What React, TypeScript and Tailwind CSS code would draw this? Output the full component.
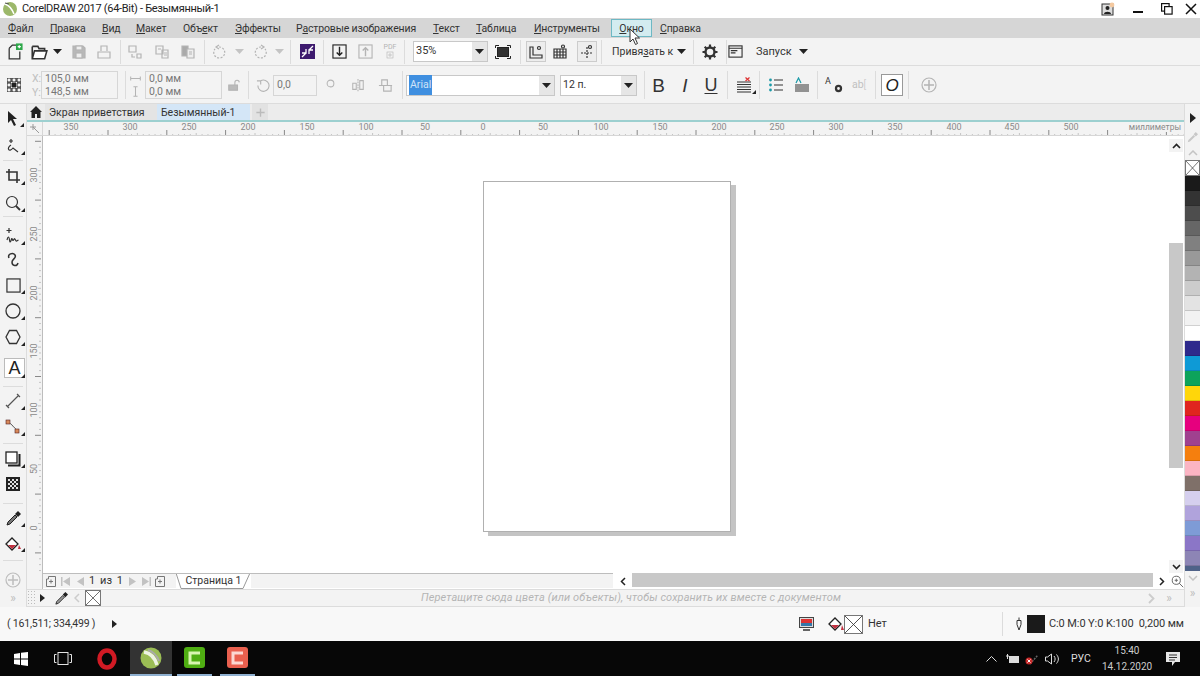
import React from "react";

type P = { children?: React.ReactNode; className?: string };
const S = ({ children, className = "text-[#333]", s = 16 }: P & { s?: number }) => (
  <svg width={s} height={s} viewBox="0 0 16 16" fill="none" stroke="currentColor" strokeWidth={1.2} className={`shrink-0 ${className}`}>
    {children}
  </svg>
);
const Slot = ({ className = "", children }: P) => (
  <div className={`flex shrink-0 items-center justify-center self-stretch ${className}`}>{children}</div>
);
const Sep = ({ className = "" }: P) => <div className={`h-[24px] w-px shrink-0 bg-[#dcdcdc] ${className}`} />;
const Gap = ({ className = "" }: P) => <div className={`shrink-0 ${className}`} />;
const Down = ({ className = "text-[#222]" }: P) => (
  <svg width="9" height="5" viewBox="0 0 9 5" className={`shrink-0 ${className}`}><path d="M0 0h9L4.5 5z" fill="currentColor" /></svg>
);
const Corner = () => <svg width="4" height="4" viewBox="0 0 4 4" className="absolute bottom-[-1px] right-[-4px]"><path d="M4 0v4H0z" fill="#222" /></svg>;

const Combo = ({ className = "", text, sel }: P & { text: string; sel?: boolean }) => (
  <div className={`flex h-[21px] shrink-0 items-stretch border border-[#c8c8c8] bg-white ${className}`}>
    <div className="flex flex-1 items-center pl-[2px]">
      <span className={sel ? "bg-[#3f8fe0] px-px py-[2px] text-[#cfe3f8]" : "text-[#333]"}>{text}</span>
    </div>
    <div className="flex w-[15px] items-center justify-center bg-[#e6e6e6]"><Down /></div>
  </div>
);

const U = ({ children }: P) => <span className="underline underline-offset-1">{children}</span>;

const menu: [string, React.ReactNode][] = [
  ["w-[42px]", <><U>Ф</U>айл</>],
  ["w-[52px]", <><U>П</U>равка</>],
  ["w-[34px]", <><U>В</U>ид</>],
  ["w-[47px]", <><U>М</U>акет</>],
  ["w-[52px]", <>Объ<U>е</U>кт</>],
  ["w-[61px]", <><U>Э</U>ффекты</>],
  ["w-[137px]", <>Р<U>а</U>стровые изображения</>],
  ["w-[43px]", <><U>Т</U>екст</>],
  ["w-[58px]", <><U>Т</U>аблица</>],
];

const hLabels: [string, number][] = [
  ["350", 71], ["300", 130], ["250", 189], ["200", 248], ["150", 307], ["100", 366], ["50", 425], ["0", 483],
  ["50", 543], ["100", 601], ["150", 660], ["200", 719], ["250", 777], ["300", 836], ["350", 895], ["400", 954], ["450", 1012], ["500", 1071],
];
const vLabels: [string, number][] = [["300", 176], ["250", 235], ["200", 294], ["150", 352], ["100", 411], ["50", 470], ["0", 529]];

const swatches = [
  "#1a1a1a", "#333333", "#4d4d4d", "#666666", "#808080", "#999999", "#b3b3b3", "#cccccc", "#e3e3e3", "#f2f2f2", "#ffffff",
  "#2e2a8c", "#0e9ad6", "#0da35b", "#ffd60a", "#e0251f", "#e6007e", "#a0418f", "#f57f0e", "#fbb4c3", "#7f7069",
  "#d5cfee", "#b0a3dc", "#7e9bd6", "#8b76c7", "#8d85b5",
];

const XBox = ({ className = "" }: P) => (
  <svg viewBox="0 0 16 16" preserveAspectRatio="none" className={`shrink-0 border border-[#777] bg-white ${className}`}>
    <path d="M0 0L16 16M16 0L0 16" stroke="#333" strokeWidth="0.8" fill="none" />
  </svg>
);

const Tool = ({ className = "", children, corner = true }: P & { corner?: boolean }) => (
  <div className={`flex shrink-0 items-center justify-center ${className}`}>
    <div className="relative flex">{children}{corner && <Corner />}</div>
  </div>
);
const HSep = () => <div className="mx-[3px] h-px shrink-0 bg-[#dcdcdc]" />;

function Title() {
  return (
    <div className="flex h-[18px] shrink-0 items-center bg-white pl-[2px] text-[#222]">
      <svg width="16" height="16" viewBox="0 0 16 16" className="shrink-0">
        <circle cx="8" cy="8" r="7" fill="#9cb86a" />
        <path d="M3 3c3 1 7 5 9 10" stroke="#fff" strokeWidth="1.6" fill="none" />
        <path d="M3 2l4 1" stroke="#555" strokeWidth="1.2" />
      </svg>
      <span className="ml-[4px] w-[1060px] text-[11px] tracking-[-0.3px]">CorelDRAW 2017 (64-Bit) - Безымянный-1</span>
      <Slot className="ml-[18px] w-[16px]">
        <svg width="14" height="14" viewBox="0 0 14 14">
          <rect x="1" y="2" width="11" height="11" fill="#ddd" stroke="#333" />
          <circle cx="6.5" cy="6" r="2" fill="#222" /><path d="M3 12c0-3 7-3 7 0z" fill="#222" />
          <circle cx="11" cy="3" r="2.4" fill="#f4c9a0" />
        </svg>
      </Slot>
      <Slot className="ml-[14px] w-[16px]"><div className="mt-[5px] h-[2px] w-[10px] bg-[#111]" /></Slot>
      <Slot className="ml-[13px] w-[16px]">
        <svg width="12" height="12" viewBox="0 0 12 12" fill="none" stroke="#111" strokeWidth="1.2"><rect x="0.6" y="0.6" width="7.5" height="7.5" /><rect x="3.6" y="3.6" width="7.5" height="7.5" fill="#fff" /></svg>
      </Slot>
      <Slot className="ml-[8px] w-[16px]">
        <svg width="12" height="12" viewBox="0 0 12 12" stroke="#111" strokeWidth="1.5"><path d="M1 1l10 10M11 1L1 11" /></svg>
      </Slot>
    </div>
  );
}

function Menu() {
  return (
    <div className="flex h-[20px] shrink-0 items-center bg-[#d6d6d6] pl-[8px] text-[10.5px] tracking-[-0.15px] text-[#333]">
      {menu.map(([w, t], i) => <div key={i} className={`shrink-0 whitespace-nowrap pt-[1px] ${w}`}>{t}</div>)}
      <div className="w-[77px] shrink-0 whitespace-nowrap pt-[1px]"><U>И</U>нструменты</div>
      <div className="flex h-[18px] w-[41px] shrink-0 items-center justify-center border border-[#6db8c4] bg-[#d3ecf0] pt-[1px]"><span><U>О</U>кно</span></div>
      <div className="ml-[8px] shrink-0 pt-[1px]"><U>С</U>правка</div>
    </div>
  );
}

function Row1() {
  const g = "text-[#b4b4b4]";
  return (
    <div className="flex h-[28px] shrink-0 items-center border-b border-[#dcdcdc] bg-[#f3f3f3] text-[11px] text-[#333]">
      <Slot className="w-[28px]"><S s={17}><path d="M3 5v10h10V8M3 5l3-3h4" /><rect x="10" y="1" width="5" height="5" fill="#2da84a" stroke="#2da84a" /><path d="M12.5 2v3M11 3.500h3" stroke="#fff" /></S></Slot>
      <Slot className="w-[22px]"><S s={18}><path d="M2 3h5l1 2h5v2M2 3v11h11l2-7H4l-2 7" fill="#fff" strokeWidth="1.4" /></S></Slot>
      <Slot className="w-[14px]"><Down /></Slot>
      <Slot className="w-[30px]"><S className={g}><path d="M2 2h10l2 2v10H2z" fill="#b8b8b8" /><rect x="5" y="2" width="6" height="4" fill="#eee" /><rect x="5" y="9" width="6" height="5" fill="#eee" /></S></Slot>
      <Slot className="w-[20px]"><S className={g}><path d="M5 7V2h6v5M2 8h12v6H2z" /></S></Slot>
      <Gap className="w-[6px]" /><Sep />
      <Slot className="w-[28px]"><S className={g}><path d="M2 2h7v6H2zM10 10h4v4h-4zM5 10v3h3" /></S></Slot>
      <Slot className="w-[26px]"><S className={g}><path d="M2 2h7v8H2zM8 6h6v8H8zM4 5h3M10 9h3M10 11h3" /></S></Slot>
      <Slot className="w-[26px]"><S className={g}><path d="M2 2h6v10H2z" fill="#aaa" /><path d="M7 5h7v9H7z" fill="#eee" /><path d="M9 8h3M9 10h3" /></S></Slot>
      <Gap className="w-[3px]" /><Sep />
      <Slot className="w-[30px]"><S className={g}><path d="M7 3a5.500 5.500 0 1 1-4 2" strokeDasharray="2 1.500" /><path d="M7 1L4 3l3 2" /></S></Slot>
      <Slot className="w-[8px]"><Down className="text-[#c4c4c4]" /></Slot>
      <Slot className="w-[34px]"><S className={g}><path d="M9 3a5.500 5.500 0 1 0 4 2" strokeDasharray="2 1.500" /><path d="M9 1l3 2-3 2" /></S></Slot>
      <Slot className="w-[4px]"><Down className="text-[#c4c4c4]" /></Slot>
      <Gap className="w-[9px]" /><Sep />
      <Slot className="w-[32px]">
        <svg width="15" height="15" viewBox="0 0 15 15"><rect width="15" height="15" fill="#3d1a6e" /><path d="M2 13l4-4M13 2L9 6M6 5v4H2M9 10V6h4" stroke="#fff" strokeWidth="1.3" fill="none" /></svg>
      </Slot>
      <Sep />
      <Slot className="w-[30px]"><S s={15} className="text-[#222]"><rect x="1" y="1" width="14" height="14" /><path d="M8 3v9M5 9l3 3 3-3" strokeWidth="1.500" /></S></Slot>
      <Slot className="w-[22px]"><S s={15} className={g}><rect x="1" y="1" width="14" height="14" /><path d="M8 13V4M5 7l3-3 3 3" strokeWidth="1.500" /></S></Slot>
      <Slot className="w-[28px]">
        <div className="flex flex-col items-center leading-none text-[#b4b4b4]"><span className="text-[7px]">PDF</span><S s={8} className={g}><rect x="2" y="2" width="12" height="12" /><path d="M8 4v8M4 8h8" /></S></div>
      </Slot>
      <Sep /><Gap className="w-[8px]" />
      <Combo className="w-[75px]" text="35%" />
      <Slot className="w-[30px]">
        <svg width="16" height="14" viewBox="0 0 16 14" fill="none" stroke="#222"><rect x="2.500" y="2.500" width="11" height="9" fill="#333" /><path d="M0.500 3V0.500H4M12 0.500h3.500V3M0.500 11v2.500H4M12 13.500h3.500V11" /></svg>
      </Slot>
      <Gap className="w-[2px]" /><Sep /><Gap className="w-[5px]" />
      <div className="flex h-[21px] w-[20px] shrink-0 items-center justify-center border border-[#ccc] bg-[#ededed]"><S><path d="M2 3v11h12v-3H5V3z" /><circle cx="11" cy="4" r="1.500" /></S></div>
      <Slot className="w-[28px]"><S><path d="M2 5h12v9H2zM2 8h12M2 11h12M5 5v9M8 5v9M11 5v9" /><circle cx="11" cy="2.500" r="1.500" /></S></Slot>
      <Slot className="w-[26px]"><div className="flex h-[21px] w-[20px] items-center justify-center border border-[#ccc] bg-[#ededed]"><S><path d="M8 3v12M2 9h12" strokeDasharray="2 1" /><circle cx="11" cy="3" r="1.500" /></S></div></Slot>
      <Gap className="w-[1px]" /><Sep /><Gap className="w-[10px]" />
      <div className="w-[62px] shrink-0 whitespace-nowrap pt-[1px] text-[10.5px]">Привя<U>з</U>ать к</div>
      <Slot className="w-[14px]"><Down /></Slot>
      <Gap className="w-[5px]" /><Sep />
      <Slot className="w-[32px]">
        <svg width="16" height="16" viewBox="0 0 16 16"><circle cx="8" cy="8" r="4.500" fill="none" stroke="#333" strokeWidth="2.400" /><path d="M8 0.500v3M8 12.500v3M0.500 8h3M12.500 8h3M2.700 2.700l2 2M11.300 11.300l2 2M13.300 2.700l-2 2M4.700 11.300l-2 2" stroke="#333" strokeWidth="2.200" /></svg>
      </Slot>
      <Sep />
      <Slot className="w-[16px]"><S s={15}><rect x="1" y="2" width="14" height="12" /><path d="M1 4.500h14M3 7h7M3 9.500h5" /></S></Slot>
      <div className="ml-[13px] w-[42px] shrink-0 pt-[1px]">Запуск</div>
      <Slot className="w-[10px]"><Down /></Slot>
    </div>
  );
}

function Row2() {
  const g = "text-[#b4b4b4]";
  return (
    <div className="flex h-[38px] shrink-0 items-center border-b border-[#dcdcdc] bg-[#f3f3f3] pt-[1px] text-[10.5px] text-[#555]">
      <Slot className="w-[28px]">
        <svg width="14" height="14" viewBox="0 0 14 14"><path d="M0 0h4v4H0zM5 0h4v4H5zM10 0h4v4h-4zM0 5h4v4H0zM10 5h4v4h-4zM0 10h4v4H0zM5 10h4v4H5zM10 10h4v4h-4z" fill="none" stroke="#222" /><rect x="5" y="5" width="4" height="4" fill="#222" /></svg>
      </Slot>
      <div className="flex w-[13px] shrink-0 flex-col gap-[3px] pl-[4px] leading-[11px] text-[#c0c0c0]"><span>X:</span><span>Y:</span></div>
      <div className="flex h-[28px] w-[77px] shrink-0 flex-col border border-[#d6d6d6] bg-[#f3f3f3] pl-[3px] leading-[13px] text-[#777]"><span>105,0 мм</span><span>148,5 мм</span></div>
      <Gap className="w-[7px]" /><Sep className="h-[28px]" />
      <div className="flex w-[19px] shrink-0 flex-col items-center gap-[2px]">
        <S s={11} className={g}><path d="M1 8h14M1 5v6M15 5v6" strokeWidth="1.500" /></S>
        <S s={11} className={g}><path d="M8 1v14M5 1h6M5 15h6" strokeWidth="1.500" /></S>
      </div>
      <div className="flex h-[28px] w-[77px] shrink-0 flex-col border border-[#d6d6d6] pl-[3px] leading-[13px] text-[#777]"><span>0,0 мм</span><span>0,0 мм</span></div>
      <Slot className="w-[24px]"><S s={14} className={g}><path d="M9 8V5a2.500 2.500 0 0 1 5 0" /><rect x="2" y="8" width="10" height="6" fill="#bbb" /></S></Slot>
      <Gap className="w-[2px]" /><Sep className="h-[28px]" />
      <Slot className="w-[24px] pl-[5px]"><S s={15} className={g}><path d="M5 3a6 6 0 1 1-3 5M1 3l4 0 0 4" /></S></Slot>
      <div className="flex h-[21px] w-[44px] shrink-0 items-center border border-[#d6d6d6] pl-[3px] text-[#777]">0,0</div>
      <Slot className="w-[26px] pb-[4px]"><S s={9} className={g}><circle cx="8" cy="8" r="6" strokeWidth="1.800" /></S></Slot>
      <Slot className="w-[29px]"><S s={14} className={g}><path d="M8 1v14" strokeDasharray="2 1" /><path d="M2 6h4v7H2zM10 3h4v10h-4z" /></S></Slot>
      <Slot className="w-[26px]"><S s={15} className={g}><path d="M1 8h14M4 2h6v6H4zM6 8h8v6H6z" /></S></Slot>
      <Gap className="w-[4px]" /><Sep className="h-[28px]" /><Gap className="w-[3px]" />
      <Combo className="w-[149px]" text="Arial" sel />
      <Gap className="w-[5px]" />
      <Combo className="w-[77px]" text="12 п." />
      <Gap className="w-[7px]" /><Sep className="h-[28px]" />
      <Slot className="w-[27px] text-[19px] leading-none text-[#333]"><span style={{ fontFamily: "'Liberation Sans', sans-serif" }}>B</span></Slot>
      <Slot className="w-[26px] text-[19px] italic leading-none text-[#333]"><span style={{ fontFamily: "'Liberation Sans', sans-serif" }}>I</span></Slot>
      <Slot className="w-[26px] text-[18px] leading-none text-[#333]"><span className="underline underline-offset-2" style={{ fontFamily: "'Liberation Sans', sans-serif" }}>U</span></Slot>
      <Gap className="w-[3px]" /><Sep className="h-[28px]" />
      <Slot className="w-[31px]">
        <div className="relative flex">
          <S><path d="M1 5h14M1 7.500h14M1 10h14M1 12.500h14M1 15h14" /><path d="M9.500 0.500l4 3.500M13.500 0.500l-4 3.500" stroke="#d33" /></S>
          <Corner />
        </div>
      </Slot>
      <Sep className="h-[28px]" />
      <Slot className="w-[31px]"><S><path d="M6 3h9M6 8h9M6 13h9" /><circle cx="2.500" cy="3" r="1.400" fill="#1b9aa8" stroke="none" /><circle cx="2.500" cy="8" r="1.400" fill="#1b9aa8" stroke="none" /><circle cx="2.500" cy="13" r="1.400" fill="#1b9aa8" stroke="none" /></S></Slot>
      <Slot className="w-[22px]"><S><path d="M1 8h14M1 10h14M1 12h14M1 14h14" /><path d="M2 6l2.500-5L7 6" stroke="#1b9aa8" /></S></Slot>
      <Gap className="w-[4px]" /><Sep className="h-[28px]" />
      <Slot className="w-[32px]">
        <div className="relative flex h-[16px] w-[18px] text-[9px] leading-none text-[#333]">
          <span className="absolute left-0 top-0">A</span>
          <svg width="9" height="9" viewBox="0 0 16 16" className="absolute bottom-0 right-0"><circle cx="8" cy="8" r="4.500" fill="none" stroke="#333" strokeWidth="4" /></svg>
        </div>
      </Slot>
      <Slot className="w-[18px] text-[#c0c0c0]">ab<span className="font-light">[</span></Slot>
      <Gap className="w-[7px]" /><Sep className="h-[28px]" /><Gap className="w-[5px]" />
      <div className="flex h-[22px] w-[22px] shrink-0 items-center justify-center border border-[#999] bg-white text-[17px] italic leading-none text-[#222]"><span style={{ fontFamily: "'Liberation Sans', sans-serif" }}>O</span></div>
      <Gap className="w-[5px]" /><Sep className="h-[28px]" />
      <Slot className="w-[40px]"><S className={g}><circle cx="8" cy="8" r="7" /><path d="M8 3v10M3 8h10" strokeWidth="1.500" /></S></Slot>
    </div>
  );
}

function Toolbox() {
  return (
    <div className="flex w-[27px] shrink-0 flex-col border-r border-[#dcdcdc] bg-[#f3f3f3]">
      <Tool className="h-[28px]"><svg width="13" height="15" viewBox="0 0 13 15"><path d="M1 0l9 8H6l3 6-2 1-3-6-3 3z" fill="#222" /></svg></Tool>
      <Tool className="h-[28px]"><S><path d="M6 1v4M4 3h4M6 7c-5 3-2 8 2 3l5 4" /></S></Tool>
      <HSep />
      <Tool className="h-[29px]"><S><path d="M4 1v11h11M1 4h11v11" strokeWidth="1.600" /></S></Tool>
      <Tool className="h-[26px]"><S><circle cx="7" cy="7" r="5.500" /><path d="M11 11l4 4" strokeWidth="1.800" /></S></Tool>
      <HSep />
      <Tool className="mt-[4px] h-[30px]"><S><path d="M4 0v5M1.500 2.500h5M2 12c1-4 2-4 2.500 0s1.500 1 2-1 1 3 2 1 1-2 2 0 1 1 3 0" /></S></Tool>
      <Tool className="h-[18px]" corner={false}><S><path d="M4 6C2 2 8 0 10 3c2 3-3 4-3 7 0 4 5 5 6 1" strokeWidth="1.500" /></S></Tool>
      <Tool className="h-[32px]"><S s={15}><rect x="1" y="1" width="14" height="14" strokeWidth="1.300" /></S></Tool>
      <Tool className="h-[20px]"><S><circle cx="8" cy="8" r="7" strokeWidth="1.300" /></S></Tool>
      <Tool className="h-[32px]"><S><path d="M4.500 1.500h7L15 8l-3.500 6.500h-7L1 8z" strokeWidth="1.300" /></S></Tool>
      <div className="ml-[4px] mt-[5px] flex h-[20px] w-[21px] shrink-0 items-center justify-center border border-[#bbb] bg-white">
        <div className="relative flex text-[18px] leading-none text-[#222]"><span style={{ fontFamily: "'Liberation Sans', sans-serif" }}>A</span><Corner /></div>
      </div>
      <div className="h-[8px] shrink-0" />
      <HSep />
      <Tool className="mt-[2px] h-[24px]"><S className="text-[#555]"><path d="M2 14L14 2M1 12l3 3M12 1l3 3" /></S></Tool>
      <Tool className="h-[28px]">
        <svg width="16" height="16" viewBox="0 0 16 16"><path d="M3 3c4 2 6 6 10 9" stroke="#555" fill="none" /><rect x="1" y="1" width="4" height="4" fill="#d8895a" stroke="#522" strokeWidth="0.600" /><rect x="10" y="10" width="4" height="4" fill="#d8895a" stroke="#522" strokeWidth="0.600" /></svg>
      </Tool>
      <div className="h-[2px] shrink-0" />
      <HSep />
      <Tool className="mt-[2px] h-[26px]"><svg width="16" height="16" viewBox="0 0 16 16" fill="none" stroke="#222" strokeWidth="1.300"><path d="M3 14.500h11.500V3" strokeWidth="2" /><rect x="1" y="1" width="11" height="11" fill="#fff" /></svg></Tool>
      <Tool className="h-[24px]" corner={false}>
        <svg width="14" height="14" viewBox="0 0 14 14"><rect width="14" height="14" fill="#222" /><path d="M2 2h2v2H2zM6 2h2v2H6zM10 2h2v2h-2zM4 4h2v2H4zM8 4h2v2H8zM2 6h2v2H2zM6 6h2v2H6zM10 6h2v2h-2zM4 8h2v2H4zM8 8h2v2H8zM2 10h2v2H2zM6 10h2v2H6zM10 10h2v2h-2z" fill="#ddd" /></svg>
      </Tool>
      <div className="h-[7px] shrink-0" />
      <HSep />
      <Tool className="mt-[1px] h-[26px]"><svg width="15" height="15" viewBox="0 0 15 15"><path d="M1 14l1-3 7-7 2 2-7 7z" fill="#777" stroke="#222" /><path d="M9 3l3-3 3 3-3 3z" fill="#222" /></svg></Tool>
      <Tool className="h-[26px]">
        <svg width="16" height="14" viewBox="0 0 16 14"><path d="M1 7l6-6 6 6-6 6z" fill="#fff" stroke="#222" strokeWidth="1.300" /><path d="M3 8l8 0-4 4z" fill="#c23140" /><path d="M14 8l2 4h-3z" fill="#c23140" /></svg>
      </Tool>
      <div className="h-[3px] shrink-0" />
      <HSep />
      <Tool className="mt-[7px] h-[24px]" corner={false}><S className="text-[#bdbdbd]"><circle cx="8" cy="8" r="7" /><path d="M8 3v10M3 8h10" strokeWidth="1.500" /></S></Tool>
      <div className="shrink-0 text-center text-[12px] leading-[12px] text-[#bdbdbd]">»</div>
    </div>
  );
}

function HRuler() {
  const ticks = Array.from({ length: 194 }, (_, i) => 6.2 + i * 5.88);
  return (
    <div className="relative h-[14px] w-[1141px] shrink-0 overflow-hidden border-b border-[#d6d6d6] bg-[#f3f3f3] text-[9px] leading-[10px] text-[#8a8a8a]">
      <svg width="1141" height="14" className="absolute left-0 top-0">
        {ticks.map((x, i) => (
          <line key={i} x1={x} x2={x} y1={i % 10 === 0 ? 8 : i % 5 === 0 ? 11 : 12} y2="13" stroke={i % 10 === 0 ? "#888" : "#c4c4c4"} strokeWidth="1" />
        ))}
      </svg>
      {hLabels.map(([t, x], i) => (
        <span key={i} className="absolute top-0 -translate-x-1/2" style={{ left: x - 43 }}>{t}</span>
      ))}
      <span className="absolute right-[3px] top-0 bg-[#f3f3f3] text-[8.5px]">миллиметры</span>
    </div>
  );
}

function VRuler() {
  const ticks = Array.from({ length: 76 }, (_, i) => 5.3 + i * 5.88);
  return (
    <div className="relative h-full w-[16px] shrink-0 overflow-hidden border-r border-[#bdbdbd] bg-[#f3f3f3] text-[9px] leading-[10px] text-[#8a8a8a]">
      <svg width="16" height="438" className="absolute left-0 top-0">
        {ticks.map((y, i) => (
          <line key={i} y1={y} y2={y} x1={i % 10 === 0 ? 8 : i % 5 === 0 ? 11 : 12} x2="14" stroke={i % 10 === 0 ? "#888" : "#c4c4c4"} strokeWidth="1" />
        ))}
      </svg>
      {vLabels.map(([t, y], i) => (
        <span key={i} className="absolute left-[2px] w-[8px] -translate-y-1/2 text-center [writing-mode:vertical-rl] rotate-180" style={{ top: y - 137 }}>{t}</span>
      ))}
    </div>
  );
}

const Nav = ({ d, className = "w-[14px]" }: P & { d: string }) => (
  <Slot className={className}><svg width="9" height="9" viewBox="0 0 9 9"><path d={d} fill="#c2c2c2" /></svg></Slot>
);
const AddPage = () => (
  <Slot className="w-[14px]"><svg width="10" height="11" viewBox="0 0 10 11" fill="none" stroke="#777"><path d="M0.500 3h2V0.500h7v10h-9zM5 3.500v4M3 5.500h4" /></svg></Slot>
);

function Center() {
  return (
    <div className="flex w-[1157px] shrink-0 flex-col">
      <div className="flex h-[18px] shrink-0 items-stretch border-b-2 border-[#9dd0d0] bg-[#ececec] text-[10.5px] text-[#333]">
        <Slot className="w-[18px]"><svg width="12" height="12" viewBox="0 0 12 12"><path d="M6 0l6 6h-1.500v6H7V8H5v4H1.500V6H0z" fill="#222" /></svg></Slot>
        <div className="flex w-[112px] shrink-0 items-center bg-[#e4e4e4] pl-[4px] pt-[1px]">Экран приветствия</div>
        <div className="flex w-[93px] shrink-0 items-center bg-[#d4e6f7] pl-[4px] pt-[1px]">Безымянный-1</div>
        <Slot className="ml-[2px] w-[16px] bg-[#e2e2e2]"><S s={11} className="text-[#bbb]"><path d="M8 2v12M2 8h12" strokeWidth="2" /></S></Slot>
      </div>
      <div className="flex h-[14px] shrink-0">
        <Slot className="w-[16px] border-b border-r border-[#d6d6d6] bg-[#f3f3f3]"><svg width="10" height="10" viewBox="0 0 10 10" stroke="#999" fill="none"><path d="M0 3h6M3 0v6M3 3l6 6" /></svg></Slot>
        <HRuler />
      </div>
      <div className="flex h-[437px] shrink-0">
        <VRuler />
        <div className="relative w-[1126px] shrink-0 bg-white">
          <div className="absolute left-[440px] top-[45px] h-[351px] w-[248px] border border-[#b0b0b0] bg-white shadow-[5px_4px_0_#c4c4c4]" />
        </div>
        <div className="flex w-[15px] shrink-0 flex-col bg-white">
          <Slot className="mt-[3px] h-[13px] w-[14px] bg-[#f3f3f3]"><svg width="9" height="6" viewBox="0 0 9 6" fill="none" stroke="#222" strokeWidth="1.600"><path d="M1 5l3.500-3.500L8 5" /></svg></Slot>
          <div className="mt-[91px] h-[225px] w-[14px] shrink-0 bg-[#c8c8c8]" />
          <div className="flex-1" />
          <Slot className="h-[13px] w-[14px] bg-[#f3f3f3]"><svg width="9" height="6" viewBox="0 0 9 6" fill="none" stroke="#222" strokeWidth="1.600"><path d="M1 1l3.500 3.500L8 1" /></svg></Slot>
        </div>
      </div>
      <div className="flex h-[16px] shrink-0">
        <div className="h-full w-[16px] shrink-0 border-r border-[#bdbdbd] bg-[#f3f3f3]" />
        <div className="flex h-[15px] w-[570px] shrink-0 items-center border-t border-[#bdbdbd] bg-[#f3f3f3] text-[11px] text-[#333]">
          <Gap className="w-[1px]" />
          <AddPage />
          <Nav className="w-[15px]" d="M0 0h1.500v9H0zM9 0v9L2 4.500z" />
          <Nav d="M8 0v9L1 4.500z" />
          <div className="flex w-[38px] shrink-0 items-center justify-between px-[2px]"><span>1</span><span>из</span><span>1</span></div>
          <Nav d="M1 0v9l7-4.500z" />
          <Nav d="M0 0v9l7-4.500zM7.500 0H9v9H7.500z" />
          <AddPage />
          <div className="relative ml-[9px] flex h-[15px] w-[75px] shrink-0 items-center justify-center bg-white">
            <svg width="75" height="15" viewBox="0 0 75 15" className="absolute left-0 top-0" fill="none" stroke="#999"><path d="M0 -1L5 14.500H67L74 -1" /></svg>
            <span className="relative text-[10.5px]">Страница 1</span>
          </div>
        </div>
        <Slot className="w-[19px] bg-white"><svg width="6" height="9" viewBox="0 0 6 9" fill="none" stroke="#222" strokeWidth="1.500"><path d="M5 1L1.500 4.500 5 8" /></svg></Slot>
        <div className="h-[14px] w-[521px] shrink-0 bg-[#c8c8c8]" />
        <Slot className="w-[17px]"><svg width="6" height="9" viewBox="0 0 6 9" fill="none" stroke="#222" strokeWidth="1.500"><path d="M1 1l3.500 3.500L1 8" /></svg></Slot>
        <Slot className="w-[14px]"><S s={13} className="text-[#666]"><circle cx="6.500" cy="6.500" r="5" /><path d="M10 10l5 5M4.500 6.500h4M6.500 4.500v4" /></S></Slot>
      </div>
      <div className="flex h-[18px] shrink-0 items-center border-y border-[#dcdcdc] bg-[#f3f3f3] text-[11px]">
        <div className="h-full w-[9px] shrink-0 bg-[radial-gradient(#bbb_1px,transparent_1px)] bg-[length:3px_3px]" />
        <Slot className="ml-[2px] w-[9px]"><svg width="5" height="8" viewBox="0 0 5 8"><path d="M0 0l5 4-5 4z" fill="#222" /></svg></Slot>
        <Slot className="ml-[6px] w-[16px]"><svg width="13" height="13" viewBox="0 0 15 15"><path d="M1 14l1-3 7-7 2 2-7 7z" fill="#999" stroke="#222" /><path d="M9 3l3-3 3 3-3 3z" fill="#222" /></svg></Slot>
        <Slot className="ml-[2px] w-[12px]"><svg width="6" height="10" viewBox="0 0 6 10" fill="none" stroke="#ccc" strokeWidth="1.500"><path d="M5 1L1 5l4 4" /></svg></Slot>
        <XBox className="ml-[2px] h-[16px] w-[16px]" />
        <div className="ml-[320px] w-[640px] shrink-0 italic tracking-[0.1px] text-[#b5b5b5]">Перетащите сюда цвета (или объекты), чтобы сохранить их вместе с документом</div>
        <Slot className="ml-[83px] w-[14px]"><svg width="7" height="11" viewBox="0 0 7 11" fill="none" stroke="#ccc" strokeWidth="1.800"><path d="M1 1l4.500 4.500L1 10" /></svg></Slot>
        <div className="ml-[4px] w-[14px] shrink-0 text-center text-[12px] leading-none text-[#bdbdbd]">»</div>
      </div>
    </div>
  );
}

function PaletteCol() {
  return (
    <div className="flex w-[16px] shrink-0 flex-col border-l border-[#dcdcdc] bg-[#f3f3f3]">
      <Slot className="h-[22px] pt-[6px]"><svg width="6" height="10" viewBox="0 0 6 10"><path d="M0 0l6 5-6 5z" fill="#222" /></svg></Slot>
      <Slot className="h-[22px]"><svg width="11" height="11" viewBox="0 0 15 15"><path d="M1 14l1-3 7-7 2 2-7 7z" fill="#c8c8c8" /><path d="M9 3l3-3 3 3-3 3z" fill="#c8c8c8" /></svg></Slot>
      <Slot className="h-[12px] pb-[3px]"><svg width="10" height="6" viewBox="0 0 10 6" fill="none" stroke="#c4c4c4" strokeWidth="1.500"><path d="M1 5l4-4 4 4" /></svg></Slot>
      <XBox className="h-[16px] w-[15px]" />
      {swatches.map((c) => (
        <div key={c} className="h-[15px] w-[15px] shrink-0 border-b border-[#00000022]" style={{ background: c }} />
      ))}
      <div className="h-[5px] shrink-0 bg-[#4f6288]" />
      <Slot className="h-[14px]"><svg width="10" height="6" viewBox="0 0 10 6" fill="none" stroke="#c4c4c4" strokeWidth="1.500"><path d="M1 1l4 4 4-4" /></svg></Slot>
      <div className="shrink-0 text-center text-[12px] leading-[16px] text-[#bdbdbd]">»</div>
    </div>
  );
}

function Status() {
  return (
    <div className="flex h-[34px] shrink-0 items-center bg-[#f8f8f8] text-[11px] text-[#333]">
      <div className="w-[107px] shrink-0 whitespace-nowrap pl-[7px] text-[10.5px] tracking-[-0.2px]">( 161,511; 334,499 )</div>
      <Slot className="w-[14px]"><svg width="5" height="8" viewBox="0 0 5 8"><path d="M0 0l5 4-5 4z" fill="#222" /></svg></Slot>
      <Gap className="w-[677px]" />
      <Slot className="w-[16px]">
        <svg width="15" height="14" viewBox="0 0 15 14"><rect x="0.500" y="0.500" width="14" height="10" fill="#ddd" stroke="#444" /><rect x="2" y="2" width="11" height="7" fill="#d33" /><rect x="2" y="6" width="11" height="3" fill="#37a" /><path d="M4 13h7" stroke="#333" strokeWidth="1.500" /></svg>
      </Slot>
      <Gap className="w-[14px]" />
      <Slot className="w-[16px]"><svg width="16" height="14" viewBox="0 0 16 14"><path d="M1 7l6-6 6 6-6 6z" fill="#fff" stroke="#222" strokeWidth="1.300" /><path d="M3 8h8l-4 4z" fill="#c23140" /><path d="M14 8l2 5h-3z" fill="#c23140" /></svg></Slot>
      <XBox className="h-[19px] w-[19px]" />
      <span className="ml-[5px] w-[134px] shrink-0">Нет</span>
      <Sep className="h-[20px]" />
      <Slot className="ml-[8px] w-[16px]"><svg width="8" height="14" viewBox="0 0 8 14" fill="none" stroke="#333"><path d="M4 0.500v3M2 3.500h4v4L4 13 2 7.500z" /></svg></Slot>
      <div className="h-[18px] w-[18px] shrink-0 bg-[#1a1a1a]" />
      <span className="ml-[4px] shrink-0 whitespace-nowrap tracking-[-0.1px]">C:0 M:0 Y:0 K:100&nbsp;&nbsp;0,200 мм</span>
    </div>
  );
}

function Taskbar() {
  return (
    <div className="flex h-[35px] shrink-0 items-center bg-[#070707] text-[#ddd]">
      <Slot className="w-[42px]">
        <svg width="14" height="14" viewBox="0 0 14 14"><path d="M0 2l6-1v5.500H0zM7 0.800L14 0v6.500H7zM0 7.500h6V13l-6-1zM7 7.500h7V14l-7-1z" fill="#fff" /></svg>
      </Slot>
      <Slot className="w-[42px]">
        <svg width="18" height="13" viewBox="0 0 18 13" fill="none" stroke="#e4e4e4"><rect x="4" y="0.500" width="10" height="12" /><path d="M2.500 2.500H0.500v8h2M15.500 2.500h2v8h-2" /></svg>
      </Slot>
      <Slot className="w-[46px]">
        <svg width="20" height="22" viewBox="0 0 20 22"><ellipse cx="10" cy="11" rx="7.500" ry="8.500" fill="none" stroke="#d11a24" strokeWidth="4.500" /></svg>
      </Slot>
      <div className="flex h-full w-[42px] shrink-0 items-center justify-center border-b-2 border-[#8fb0d0] bg-[#333]">
        <svg width="22" height="22" viewBox="0 0 22 22"><circle cx="11" cy="11" r="10.500" fill="#9bbd55" /><path d="M4 5c6 1 11 6 13 13" stroke="#eef3e2" strokeWidth="3.500" fill="none" /><path d="M8 3c4 1 9 5 11 11" stroke="#aaa" strokeWidth="2" fill="none" /></svg>
      </div>
      <div className="ml-[5px] flex h-full w-[35px] shrink-0 items-center justify-center border-b-2 border-[#8fb0d0]">
        <div className="flex h-[21px] w-[21px] items-center justify-center rounded-[3px] bg-[#4fae12]"><svg width="13" height="14" viewBox="0 0 13 14" fill="none" stroke="#d8f5b0" strokeWidth="3"><path d="M12 2H2v10h10" /></svg></div>
      </div>
      <div className="ml-[8px] flex h-full w-[35px] shrink-0 items-center justify-center border-b-2 border-[#8fb0d0]">
        <div className="flex h-[21px] w-[21px] items-center justify-center rounded-[3px] bg-[#e9604f]"><svg width="13" height="14" viewBox="0 0 13 14" fill="none" stroke="#fbd8d2" strokeWidth="3"><path d="M12 2H2v10h10" /></svg></div>
      </div>
      <Gap className="w-[728px]" />
      <Slot className="w-[16px]"><svg width="11" height="6" viewBox="0 0 11 6" fill="none" stroke="#ddd"><path d="M0.500 5.500l5-5 5 5" /></svg></Slot>
      <Slot className="ml-[6px] w-[16px]"><svg width="14" height="10" viewBox="0 0 14 10"><rect x="3" y="2" width="10" height="7" fill="#ddd" /><path d="M0 2h3M1.500 0v5" stroke="#ddd" /></svg></Slot>
      <Slot className="ml-[4px] w-[14px]"><svg width="14" height="12" viewBox="0 0 14 12"><path d="M5 11L13 2" stroke="#666" strokeWidth="1.500" strokeDasharray="2 1" /><circle cx="4" cy="8" r="3.500" fill="#c92a2a" /><path d="M2.500 6.500l3 3M5.500 6.500l-3 3" stroke="#fff" /></svg></Slot>
      <Slot className="ml-[6px] w-[16px]"><svg width="16" height="12" viewBox="0 0 16 12" fill="none" stroke="#ddd"><path d="M0.500 4v4h2l4 3V1l-4 3zM9 3c1.500 2 1.500 4 0 6M11.500 1.500c2.500 3 2.500 6 0 9" /></svg></Slot>
      <span className="ml-[10px] w-[22px] shrink-0 whitespace-nowrap text-[10.5px]">РУС</span>
      <div className="ml-[9px] flex w-[50px] shrink-0 flex-col items-center gap-[3px] whitespace-nowrap text-[10px] leading-[13px] text-[#ccc]">
        <span>15:40</span><span>14.12.2020</span>
      </div>
      <Slot className="ml-[12px] w-[18px]"><svg width="14" height="14" viewBox="0 0 14 14"><path d="M0 0h14v10H9l-3 4v-4H0z" fill="#e6e6e6" /><path d="M3 3h8M3 5.500h8M3 8h6" stroke="#333" /></svg></Slot>
    </div>
  );
}

export default function App() {
  return (
    <div className="relative flex h-[676px] w-[1200px] flex-col overflow-hidden bg-white" style={{ fontFamily: "'Roboto', 'Noto Sans', sans-serif" }}>
      <Title />
      <Menu />
      <Row1 />
      <Row2 />
      <div className="flex h-[503px] shrink-0 overflow-hidden">
        <Toolbox />
        <Center />
        <PaletteCol />
      </div>
      <Status />
      <Taskbar />
      <svg width="13" height="18" viewBox="0 0 13 18" className="absolute left-[629px] top-[28px]">
        <path d="M1 1v13l3-3 2.500 5.500 2-1L6 10h4.500z" fill="#fff" stroke="#333" />
      </svg>
    </div>
  );
}
